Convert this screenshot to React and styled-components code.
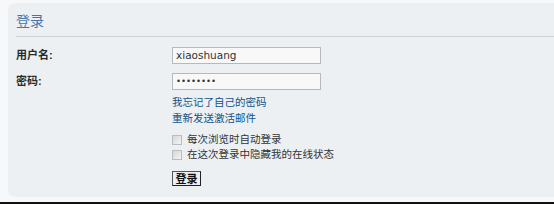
import React from 'react'
import styled, { createGlobalStyle } from 'styled-components'

const GlobalStyle = createGlobalStyle`
  html, body {
    margin: 0;
    padding: 0;
    background: #f6f8f9;
  }
  body {
    font-family: "Liberation Sans", "Noto Sans CJK SC", sans-serif;
    font-size: 11px;
    color: #333;
  }
`

const Page = styled.div`
  width: 554px;
  height: 204px;
  box-sizing: border-box;
  display: flex;
  flex-direction: column;
  overflow: hidden;
`

const Panel = styled.div`
  margin: 3px 0 0 8px;
  height: 194px;
  background: #ecf0f3;
  border-radius: 7px 0 0 7px;
  box-sizing: border-box;
`

const Title = styled.h2`
  margin: 0 0 0 8px;
  height: 34px;
  box-sizing: border-box;
  padding-top: 10px;
  font-size: 14px;
  font-weight: normal;
  color: #4474ae;
  line-height: 16px;
  border-bottom: 1px solid #cdd2d6;
`

const Form = styled.div`
  padding: 10px 0 0 8px;
  display: flex;
  flex-direction: column;
`

const Row = styled.div`
  display: flex;
  align-items: flex-start;
  margin-bottom: ${p => p.$gap || 0}px;
`

const Label = styled.div`
  width: 156px;
  font-weight: bold;
  line-height: 17px;
  color: #2b2b2b;
`

const Field = styled.div`
  display: flex;
  flex-direction: column;
`

const Input = styled.div`
  width: 149px;
  height: 17px;
  box-sizing: border-box;
  border: 1px solid #b4bac0;
  background: #f8f8f8;
  padding: 0 3px;
  font-size: ${p => (p.$dots ? '8.5px' : '10.5px')};
  line-height: 15px;
  color: #333;
  font-family: "DejaVu Sans", sans-serif;
`

const Spacer = styled.div`
  height: ${p => p.$h}px;
`

const LinkText = styled.a`
  color: #105289;
  text-decoration: none;
  font-size: 10.5px;
  line-height: 16px;
  display: block;
`

const Check = styled.label`
  display: flex;
  align-items: center;
  font-size: 10.5px;
  line-height: 15px;
  color: #333;
`

const Box = styled.span`
  width: 8px;
  height: 8px;
  border: 1px solid #bcbcbc;
  background: linear-gradient(135deg, #d6d6d6, #f4f4f4);
  margin-right: 5px;
`

const Button = styled.button`
  margin-top: 9px;
  width: 29px;
  height: 15px;
  padding: 0;
  font-family: "Noto Sans CJK SC", sans-serif;
  font-size: 11px;
  font-weight: bold;
  line-height: 13px;
  color: #111;
  background: #efefef;
  border: 1px solid #555;
  border-right-color: #222;
  border-bottom-color: #222;
`

const Footer = styled.div`
  margin-top: auto;
  height: 2px;
  background: #111;
`

export default function App() {
  return (
    <>
      <GlobalStyle />
      <Page>
        <Panel>
          <Title>登录</Title>
          <Form>
            <Row $gap={9}>
              <Label>用户名:</Label>
              <Input>xiaoshuang</Input>
            </Row>
            <Row>
              <Label>密码:</Label>
              <Field>
                <Input $dots>••••••••</Input>
                <Spacer $h={4} />
                <LinkText href="#">我忘记了自己的密码</LinkText>
                <LinkText href="#">重新发送激活邮件</LinkText>
                <Spacer $h={6} />
                <Check><Box />每次浏览时自动登录</Check>
                <Check><Box />在这次登录中隐藏我的在线状态</Check>
                <div><Button>登录</Button></div>
              </Field>
            </Row>
          </Form>
        </Panel>
        <Footer />
      </Page>
    </>
  )
}
